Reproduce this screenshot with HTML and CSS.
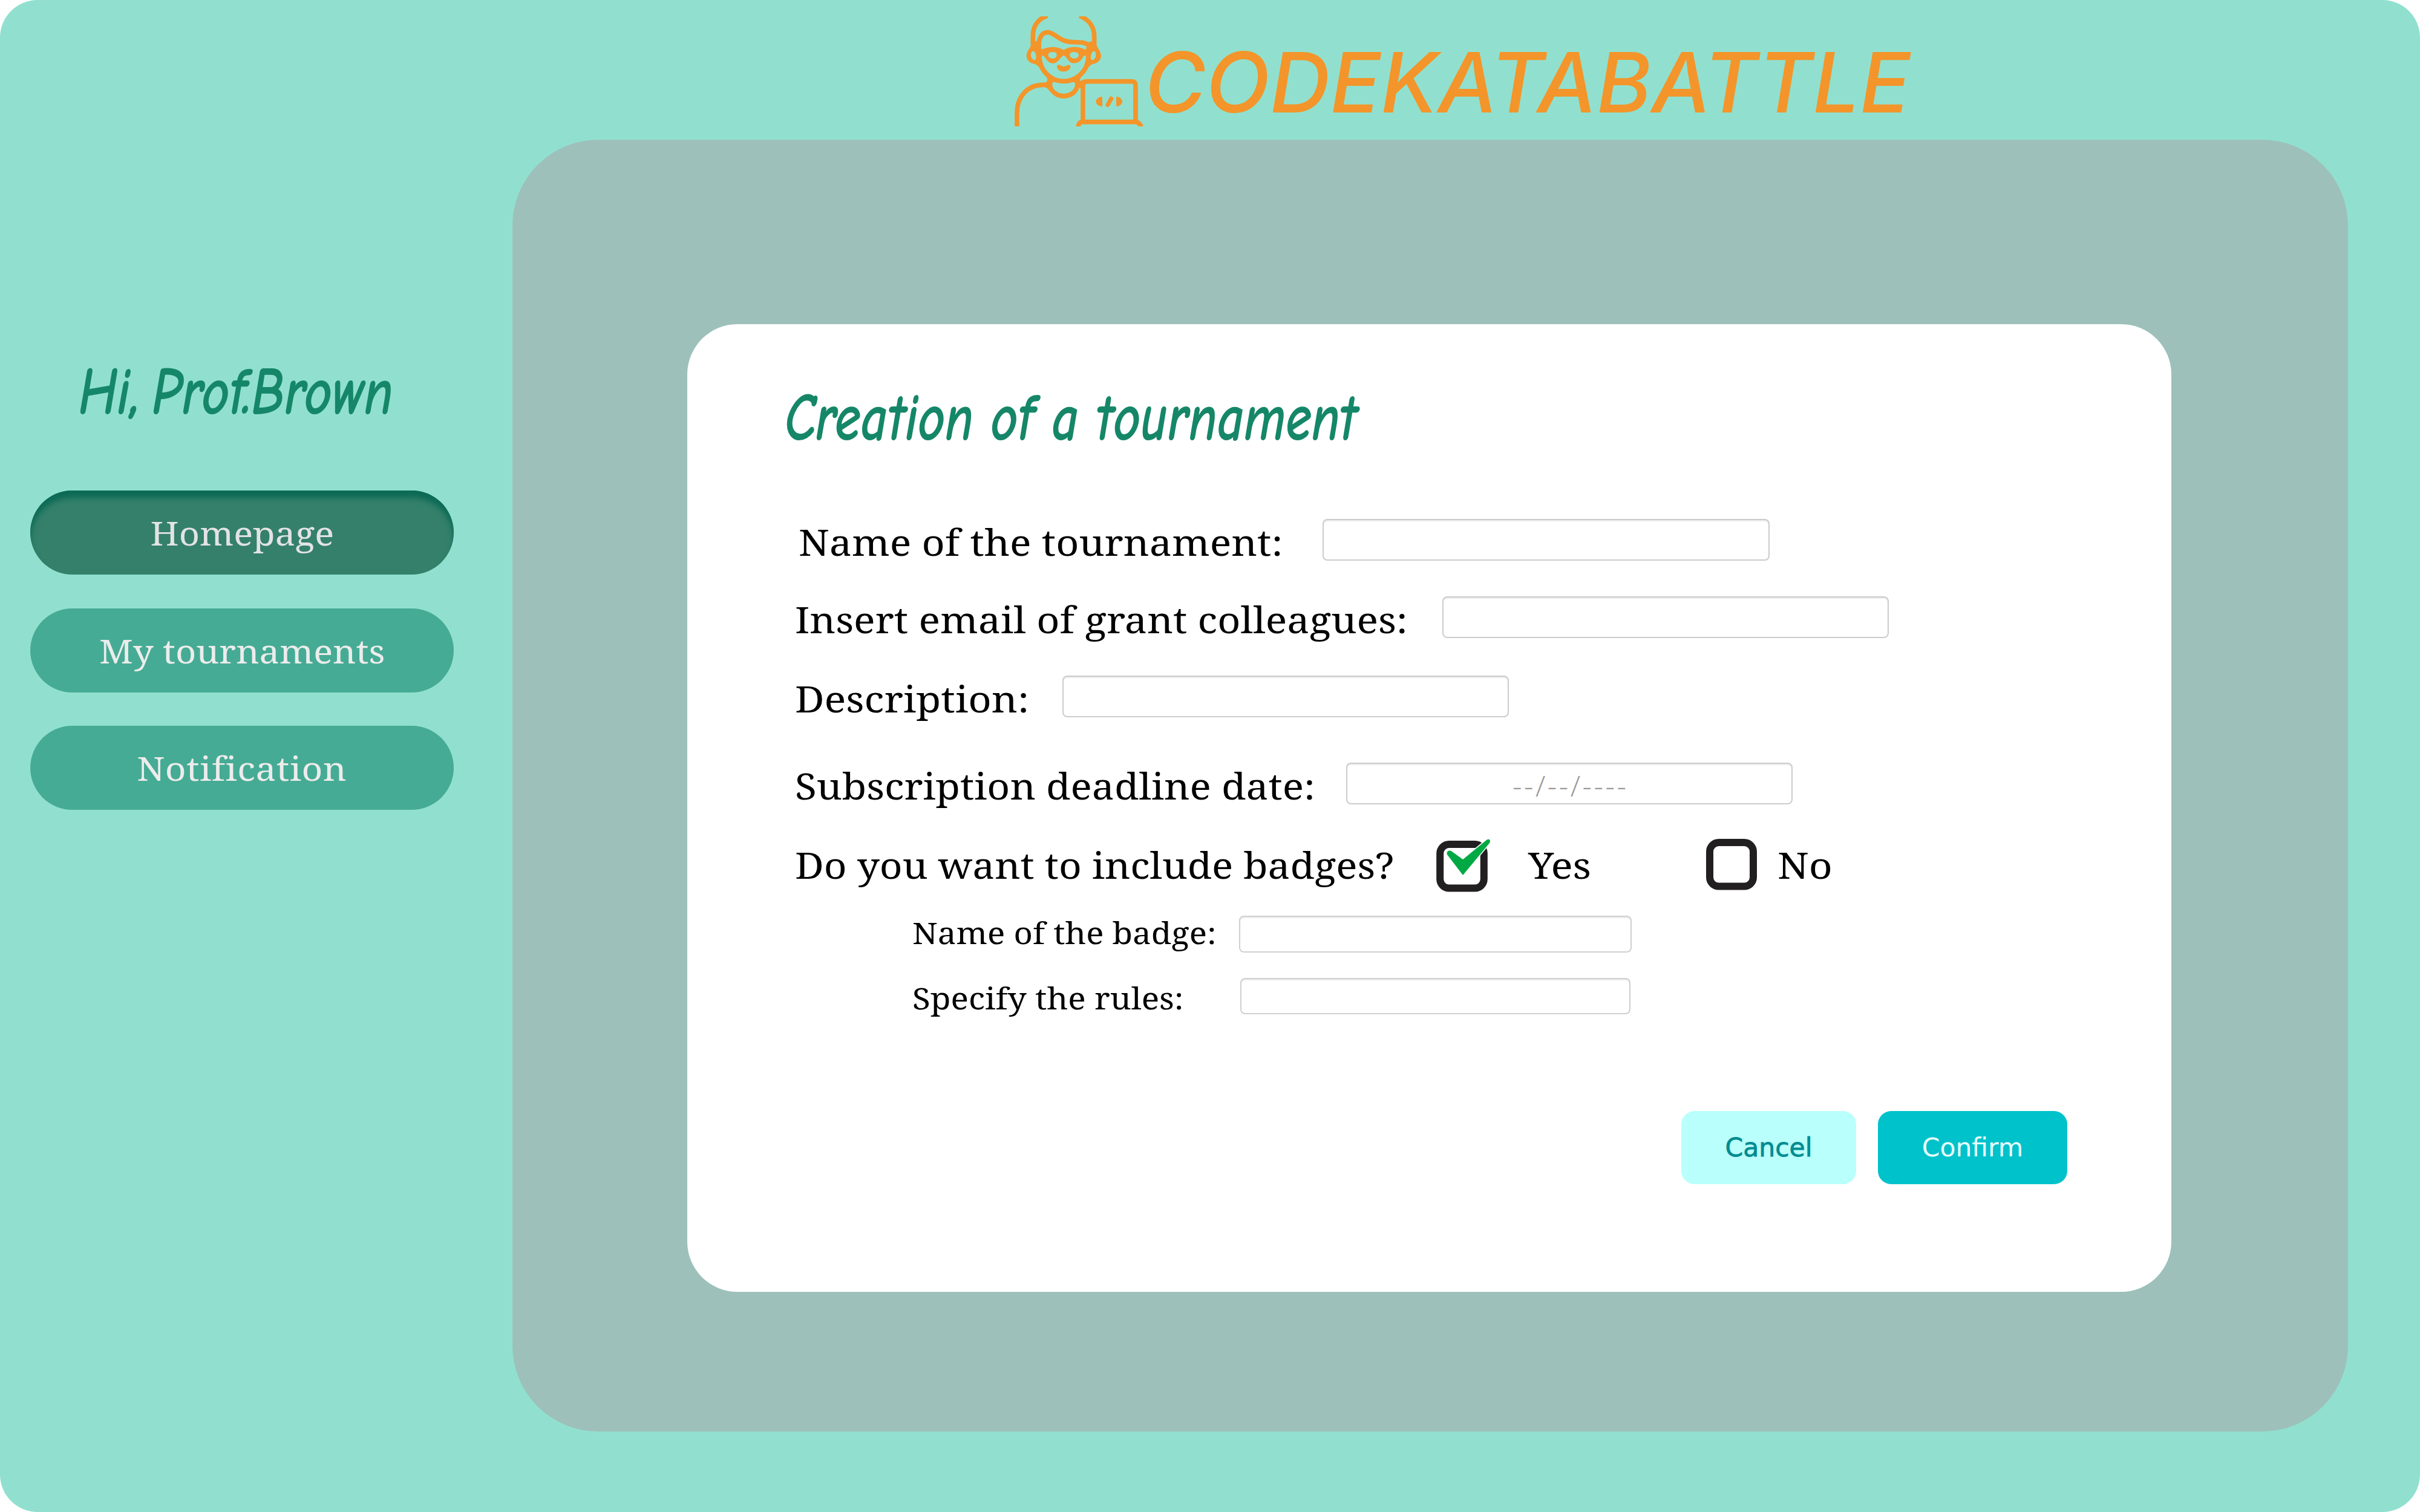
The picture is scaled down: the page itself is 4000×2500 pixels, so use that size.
FILE: index.html
```html
<!DOCTYPE html>
<html lang="en">
<head>
<meta charset="utf-8">
<title>CodeKataBattle</title>
<link rel="stylesheet" href="styles.css">
</head>
<body>
<div class="page">
  <aside class="sidebar">
    <svg class="greeting" viewBox="0 0 600 180" role="heading" aria-level="2">
      <text class="script script--tight" x="18" y="118" textLength="520" lengthAdjust="spacingAndGlyphs">Hi, Prof.Brown</text>
    </svg>
    <nav class="menu">
      <a class="menu-item menu-item--active"><span class="menu-text">Homepage</span></a>
      <a class="menu-item"><span class="menu-text">My tournaments</span></a>
      <a class="menu-item"><span class="menu-text menu-text--wide">Notification</span></a>
    </nav>
  </aside>

  <main class="content">
    <header class="brand">
      <svg class="brand-icon" viewBox="105 81 651 546" aria-hidden="true">
        <g class="line">
          <path d="M274 78C228 92 202 130 202 175V222"/>
          <path d="M433 78C482 98 506 135 506 180V225"/>
          <path d="M228 250C228 195 243 160 274 160C312 160 330 208 400 209C440 210 460 208 487 230"/>
          <path d="M234 240V278C234 350 290 403 354 403C418 403 477 350 477 278V238"/>
          <path d="M123 630V560C123 480 175 421 250 421H275"/>
          <path d="M450 605V420Q450 404 472 404H692Q711 404 711 424V605Z"/>
          <path d="M427 630C427 608 438 608 450 600"/>
          <path d="M711 600C726 612 737 615 738 630"/>
        </g>
        <g class="solid">
          <path fill-rule="evenodd" d="M192 215C195 235 170 250 170 277C170 300 190 315 212 318C235 325 240 355 265 378C272 385 275 392 275 400L300 385C260 360 243 320 243 275V200L215 205ZM206 254C196 252 191 264 192 275C193 288 204 299 213 298C220 290 220 262 206 254Z"/>
          <path fill-rule="evenodd" d="M515 210C515 235 539 250 540 277C540 300 520 315 498 318C475 325 470 355 445 378C437 385 435 392 435 400L408 385C448 360 467 320 467 275V235C469 225 468 225 460 220L490 205ZM502 254C512 252 514 264 514 275C513 288 504 299 494 298C484 290 488 262 502 254Z"/>
          <path fill-rule="evenodd" d="M240 248C262 238 280 233 302 233C325 233 340 240 354 248C370 238 385 233 408 233C430 233 450 240 467 248V278C450 270 450 290 438 300C420 318 395 318 380 302C370 292 364 276 354 276C345 276 338 292 326 303C312 318 290 318 274 302C262 290 258 270 240 278ZM300 258C285 258 278 264 278 273C278 283 288 290 300 290C312 290 320 283 320 272C320 262 312 258 300 258ZM408 258C393 258 385 262 385 272C385 283 396 290 408 290C420 290 429 283 429 273C429 264 420 258 408 258Z"/>
          <path d="M321 332C321 320 332 318 340 325C350 331 360 331 370 325C380 318 389 323 388 334C382 350 368 355 354 355C338 355 325 348 321 332Z"/>
          <path fill-rule="evenodd" d="M272 380C278 398 272 408 258 412V432C285 432 290 488 354 488C400 488 424 460 432 435L448 445V396C434 408 430 398 440 380C398 410 310 410 272 380ZM298 418C298 404 305 406 315 408C340 416 370 416 395 408C405 405 411 408 411 418C411 445 385 465 354 465C325 465 298 445 298 418Z"/>
          <path d="M546 481V527C530 530 514 515 514 504C514 493 530 477 546 481Z"/>
          <path d="M615 481V527C631 530 645 515 645 504C645 493 631 477 615 481Z"/>
        </g>
        <path class="slash" d="M573 520L590 489"/>
      </svg>
      <h1 class="brand-name">CODEKATABATTLE</h1>
    </header>

    <section class="panel">
      <form class="card">
        <svg class="card-title" viewBox="0 0 1040 180" role="heading" aria-level="2">
          <text class="script" x="17" y="121" textLength="946" lengthAdjust="spacingAndGlyphs">Creation of a tournament</text>
        </svg>

        <div class="row row--name">
          <label class="label" for="name">Name of the tournament:</label>
          <input class="field" id="name" type="text">
        </div>
        <div class="row row--email">
          <label class="label" for="email">Insert email of grant colleagues:</label>
          <input class="field" id="email" type="text">
        </div>
        <div class="row row--description">
          <label class="label" for="description">Description:</label>
          <input class="field" id="description" type="text">
        </div>
        <div class="row row--deadline">
          <label class="label" for="deadline">Subscription deadline date:</label>
          <input class="field" id="deadline" type="text" placeholder="--/--/----">
        </div>
        <div class="row row--badges">
          <span class="label">Do you want to include badges?</span>
          <svg class="check check--yes" viewBox="0 0 92 88">
            <rect class="box" x="6.2" y="9" width="72.6" height="72.6" rx="15"/>
            <path class="tick" d="M18 26C16 20 22 18 26 21L44 34L83 2C87-1 91 2 88 7L44 60Z"/>
          </svg>
          <span class="label label--yes">Yes</span>
          <svg class="check check--no" viewBox="0 0 92 88">
            <rect class="box" x="6" y="6" width="72" height="72.6" rx="15"/>
          </svg>
          <span class="label label--no">No</span>
        </div>
        <div class="row row--sub row--badge-name">
          <label class="label" for="badge">Name of the badge:</label>
          <input class="field" id="badge" type="text">
        </div>
        <div class="row row--sub row--rules">
          <label class="label" for="rules">Specify the rules:</label>
          <input class="field" id="rules" type="text">
        </div>

        <div class="actions">
          <button class="btn btn--cancel" type="button">Cancel</button>
          <button class="btn btn--confirm" type="button">Confirm</button>
        </div>
      </form>
    </section>
  </main>
</div>
</body>
</html>
```
FILE: styles.css
```css
* { box-sizing: border-box; }

body { margin: 0; background: #fff; }

.page {
  display: flex;
  width: 4000px;
  height: 2500px;
  border-radius: 62px;
  background: #91e0cf;
  font-family: "Noto Serif", "DejaVu Serif Condensed", serif;
  overflow: hidden;
}

.script {
  font: italic 700 111px "Comic Neue", Lato, sans-serif;
  word-spacing: -0.03em;
  fill: #158768;
}

.script--tight { word-spacing: -0.14em; }

/* Sidebar */
.sidebar {
  flex: none;
  width: 847px;
  padding: 566px 97px 0 50px;
}

.greeting {
  display: block;
  width: 600px;
  height: 180px;
  margin: 0 0 65px 62px;
  overflow: visible;
}

.menu {
  display: flex;
  flex-direction: column;
  gap: 55.5px;
}

.menu-item {
  height: 139px;
  border-radius: 70px;
  background: #46ab94;
  color: #ececec;
  font-size: 55px;
  line-height: 140px;
  text-align: center;
}

.menu-item--active {
  background: #34806b;
  color: #e3e3e3;
  box-shadow: inset 0 12px 10px #0c6a55;
}

.menu-text {
  display: inline-block;
  transform: scaleX(1.082);
}

.menu-text--wide { transform: scaleX(1.1); letter-spacing: 0.4px; }

/* Header */
.content { flex: none; width: 3034px; }

.brand {
  display: flex;
  align-items: flex-start;
  height: 231px;
  padding: 27px 0 0 828px;
}

.brand-icon { flex: none; width: 217px; height: 182px; }
.brand-icon .line { fill: none; stroke: #f3952a; stroke-width: 23; }
.brand-icon .solid { fill: #f3952a; }
.brand-icon .slash { stroke: #f3952a; stroke-width: 21; stroke-linecap: round; }

.brand-name {
  margin: 0;
  padding-top: 18px;
  color: #f3952a;
  font: italic 500 138px/182px Inter, sans-serif;
}

/* Form card */
.panel {
  height: 2136px;
  padding: 305px 292px 0 289px;
  border-radius: 142px;
  background: #9ec0ba;
}

.card {
  height: 1600px;
  padding: 70px 172px 0 164px;
  border-radius: 83px;
  background: #fff;
}

.card-title {
  display: block;
  width: 1040px;
  height: 180px;
  margin-left: -20px;
  overflow: visible;
}

.row {
  display: flex;
  align-items: flex-start;
  height: 68px;
  padding-left: 14px;
}

.label {
  flex: none;
  color: #000;
  font-size: 61px;
  line-height: 75px;
  white-space: nowrap;
  transform: scaleX(1.088);
  transform-origin: left;
}

.field {
  flex: none;
  width: 738.5px;
  height: 69px;
  margin: 0;
  padding: 5px 0 0 4px;
  border: 2px solid #ccc;
  border-radius: 8px;
  background: #fff;
  box-shadow: inset 0 2px 1px #ebebeb;
  text-align: center;
  font: 300 48px "Open Sans", sans-serif;
  letter-spacing: 3.5px;
}

.field::placeholder { color: #999; opacity: 1; }

.row--name { margin-top: 72px; padding-left: 20px; }
.row--name .label { width: 866px; }

.row--email { margin-top: 60px; }
.row--email .label { width: 1069.5px; }

.row--description { margin-top: 63px; }
.row--description .label { width: 441.5px; transform: scaleX(1.096); }

.row--deadline { margin-top: 76px; }
.row--deadline .label { width: 910.5px; transform: scaleX(1.081); }

.row--badges { height: 88px; margin-top: 58px; }
.row--badges .label { width: 1060px; padding-top: 5px; transform: scaleX(1.077); }
.row--badges .label--yes { width: 207px; margin-left: 60px; transform: scaleX(1.107); }
.row--badges .label--no { width: auto; margin-left: 26px; transform: scaleX(1.11); }

.check { flex: none; width: 92px; height: 88px; overflow: visible; }
.check--no { margin-left: 87px; }
.box { fill: #fff; stroke: #221f20; stroke-width: 12; }
.tick { fill: #00a944; stroke: #fff; stroke-width: 3; paint-order: stroke; }

.row--sub { height: 61px; padding-left: 208px; }
.row--sub .label { font-size: 50px; line-height: 56px; }
.row--sub .field { width: 649px; height: 61px; border-color: #d0d0d0; }

.row--badge-name { margin-top: 39px; }
.row--badge-name .label { width: 539.5px; transform: scaleX(1.092); }

.row--rules { margin-top: 42px; }
.row--rules .label { width: 541.5px; line-height: 66px; transform: scaleX(1.098); }
.row--rules .field { width: 645px; height: 60px; }

.actions {
  display: flex;
  justify-content: flex-end;
  gap: 36px;
  margin-top: 159px;
}

.btn {
  height: 121px;
  padding: 0;
  border: 0;
  border-radius: 22px;
  font: 42.5px "DejaVu Sans", sans-serif;
}

.btn--cancel { width: 289px; background: #b9fffb; color: #008c91; -webkit-text-stroke: 0.8px #008c91; }
.btn--confirm { width: 313px; background: #00c2cb; color: #e9fffe; }
```
